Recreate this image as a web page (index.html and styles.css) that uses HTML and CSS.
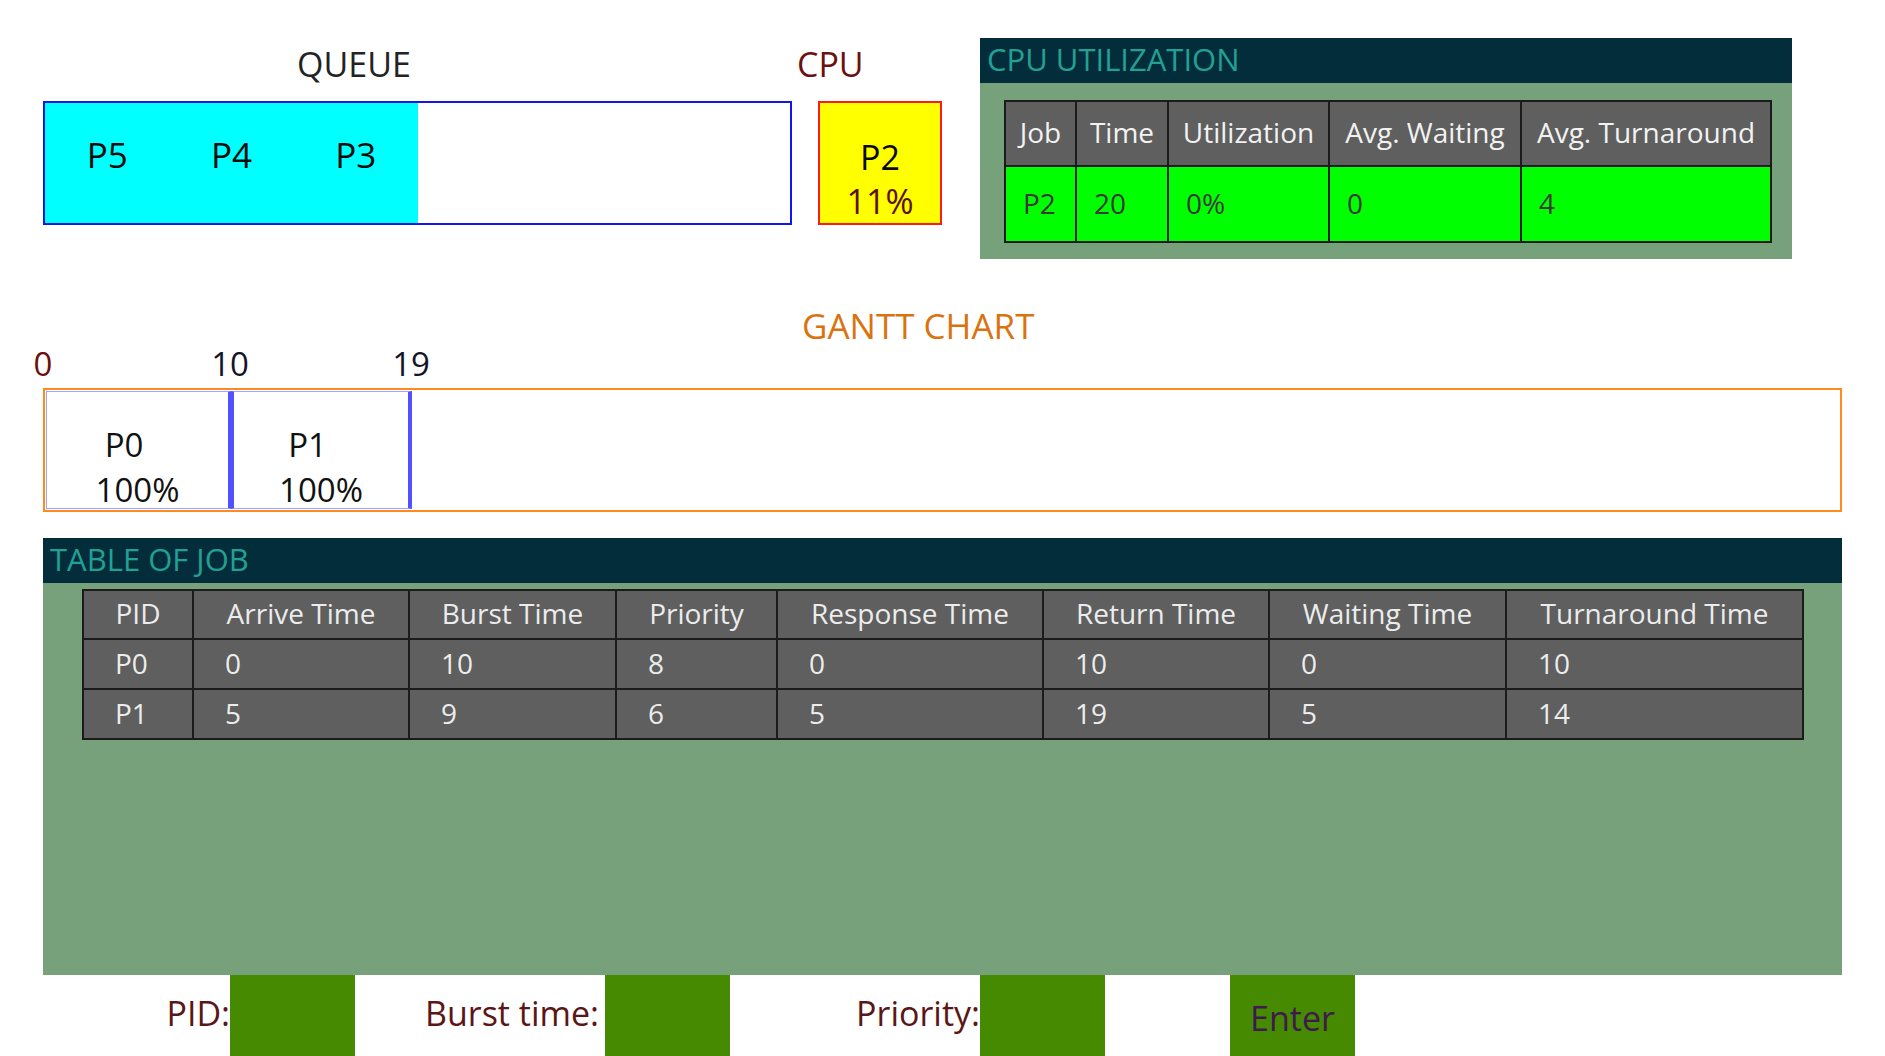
FILE: index.html
```html
<!DOCTYPE html>
<html lang="en">
<head>
<meta charset="utf-8">
<title>CPU Scheduling</title>
<link rel="stylesheet" href="styles.css">
</head>
<body>
<div class="app">
  <section class="top">
    <div class="queue-area">
      <div class="label queue-label">QUEUE</div>
      <div class="queue-box">
        <div class="queue-fill">
          <div class="qitem">P5</div>
          <div class="qitem">P4</div>
          <div class="qitem">P3</div>
        </div>
      </div>
    </div>
    <div class="cpu-area">
      <div class="label cpu-label">CPU</div>
      <div class="cpu-box">
        <div class="cpu-job">P2</div>
        <div class="cpu-pct">11%</div>
      </div>
    </div>
    <div class="panel util">
      <div class="panel-head">CPU UTILIZATION</div>
      <div class="util-body">
        <table class="util-table">
          <colgroup>
            <col class="uc1"><col class="uc2"><col class="uc3"><col class="uc4"><col class="uc5">
          </colgroup>
          <tr class="head"><th>Job</th><th>Time</th><th>Utilization</th><th>Avg. Waiting</th><th>Avg. Turnaround</th></tr>
          <tr class="data"><td>P2</td><td>20</td><td>0%</td><td>0</td><td>4</td></tr>
        </table>
      </div>
    </div>
  </section>

  <section class="gantt">
    <div class="gantt-title">GANTT CHART</div>
    <div class="ticks">
      <span class="tick tick-start" style="left:0px">0</span>
      <span class="tick" style="left:187px">10</span>
      <span class="tick" style="left:368px">19</span>
    </div>
    <div class="gantt-box">
      <div class="gcell g-p0">
        <div class="gname">P0</div>
        <div class="gpct">100%</div>
      </div>
      <div class="gcell g-p1">
        <div class="gname">P1</div>
        <div class="gpct">100%</div>
      </div>
    </div>
  </section>

  <section class="panel jobs">
    <div class="panel-head">TABLE OF JOB</div>
    <div class="jobs-body">
      <table class="job-table">
        <colgroup>
          <col class="jc1"><col class="jc2"><col class="jc3"><col class="jc4"><col class="jc5"><col class="jc6"><col class="jc7"><col class="jc8">
        </colgroup>
        <tr class="head"><th>PID</th><th>Arrive Time</th><th>Burst Time</th><th>Priority</th><th>Response Time</th><th>Return Time</th><th>Waiting Time</th><th>Turnaround Time</th></tr>
        <tr><td>P0</td><td>0</td><td>10</td><td>8</td><td>0</td><td>10</td><td>0</td><td>10</td></tr>
        <tr><td>P1</td><td>5</td><td>9</td><td>6</td><td>5</td><td>19</td><td>5</td><td>14</td></tr>
      </table>
    </div>
  </section>

  <section class="inputs">
    <div class="in-label l1">PID:</div>
    <div class="in-box"></div>
    <div class="in-label l2">Burst time:</div>
    <div class="in-box"></div>
    <div class="in-label l3">Priority:</div>
    <div class="in-box"></div>
    <div class="spacer"></div>
    <div class="in-box enter">Enter</div>
  </section>
</div>
</body>
</html>
```

FILE: styles.css
```css
html, body {
  margin: 0;
  padding: 0;
  height: 100%;
  overflow: hidden;
  background: #ffffff;
}

body {
  font-family: "Open Sans", "Noto Sans", sans-serif;
  color: #111111;
}

.app {
  padding: 0 43px;
}

/* ---------- top row ---------- */
.top {
  display: flex;
  align-items: flex-start;
  padding-top: 38px;
  height: 257px;
  box-sizing: border-box;
}

.label {
  font-size: 34px;
  line-height: 46px;
  margin-top: 3px;
  white-space: nowrap;
}

.queue-area {
  width: 749px;
  flex: none;
}

.queue-label {
  padding-left: 254px;
  color: #232323;
}

.queue-box {
  margin-top: 14px;
  height: 124px;
  box-sizing: border-box;
  border: 2px solid #1414f0;
  display: flex;
}

.queue-fill {
  display: flex;
  background: #00ffff;
}

.qitem {
  width: 124.33px;
  text-align: center;
  font-size: 35px;
  line-height: 44px;
  padding-top: 30px;
  color: #0a0a0a;
}

.cpu-area {
  margin-left: 5px;
  width: 145px;
  flex: none;
}

.cpu-label {
  color: #6b1111;
}

.cpu-box {
  margin-left: 21px;
  margin-top: 14px;
  width: 124px;
  height: 124px;
  box-sizing: border-box;
  border: 2px solid #ff1a1a;
  background: #ffff00;
  display: flex;
  flex-direction: column;
  justify-content: flex-end;
  align-items: center;
  font-size: 34px;
  line-height: 44px;
}

.cpu-job {
  color: #0a0a0a;
}

.cpu-pct {
  color: #5c1005;
}

/* ---------- panels ---------- */
.panel {
  background: #76a17b;
}

.panel-head {
  height: 45px;
  box-sizing: border-box;
  background: #032d3b;
  color: #22a093;
  font-size: 31px;
  line-height: 42px;
  padding-left: 7px;
  white-space: nowrap;
}

.util {
  margin-left: 38px;
  width: 812px;
  flex: none;
}

.util-body {
  padding: 17px 22px 16px 24px;
}

table {
  border-collapse: collapse;
  table-layout: fixed;
}

th, td {
  border: 2px solid #1b1b1b;
  font-weight: normal;
  white-space: nowrap;
  padding: 0;
}

.util-table {
  width: 766px;
  font-size: 28px;
}

.uc1 { width: 71px; }
.uc2 { width: 92px; }
.uc3 { width: 161px; }
.uc4 { width: 192px; }
.uc5 { width: 250px; }

.util-table .head {
  height: 65px;
  background: #5f5f5f;
  color: #f2f2f2;
}

.util-table th {
  text-align: center;
  padding-bottom: 4px;
}

.util-table .data {
  height: 76px;
  background: #00ff00;
  color: #3a3a3a;
}

.util-table td {
  text-align: left;
  padding-left: 17px;
  padding-bottom: 3px;
}

/* ---------- gantt ---------- */
.gantt {
  margin-top: 49px;
}

.gantt-title {
  font-size: 35px;
  line-height: 40px;
  color: #da730f;
  padding-left: 759px;
}

.ticks {
  position: relative;
  height: 42px;
  font-size: 33px;
  line-height: 40px;
  color: #141428;
}

.tick {
  position: absolute;
  top: -2px;
  transform: translateX(-50%);
}

.tick-start {
  color: #6a1010;
}

.gantt-box {
  height: 124px;
  box-sizing: border-box;
  border: 2px solid #ff8c1a;
  padding: 1px;
  display: flex;
}

.gcell {
  height: 100%;
  box-sizing: border-box;
  border: 1px solid #a3a3ff;
  border-right: 4px solid #5151ff;
  display: flex;
  flex-direction: column;
  align-items: center;
  padding-top: 30px;
  font-size: 33px;
  line-height: 45px;
  color: #111111;
}

.gcell + .gcell {
  border-left: 2px solid #5151ff;
}

.g-p0 { width: 186px; }
.g-p1 { width: 180px; }

.gname {
  padding-right: 27px;
}

/* ---------- job table ---------- */
.jobs {
  margin-top: 26px;
}

.jobs-body {
  height: 392px;
  box-sizing: border-box;
  padding: 6px 40px 0 39px;
}

.job-table {
  width: 1720px;
  font-size: 28px;
  background: #5f5f5f;
  color: #ececec;
}

.jc1 { width: 110px; }
.jc2 { width: 216px; }
.jc3 { width: 207px; }
.jc4 { width: 161px; }
.jc5 { width: 266px; }
.jc6 { width: 226px; }
.jc7 { width: 237px; }
.jc8 { width: 297px; }

.job-table .head {
  height: 49px;
}

.job-table th {
  text-align: center;
  padding-bottom: 3px;
}

.job-table tr {
  height: 50px;
}

.job-table td {
  text-align: left;
  padding-left: 31px;
  padding-bottom: 3px;
}

/* ---------- inputs ---------- */
.inputs {
  display: flex;
  height: 81px;
}

.in-label {
  text-align: right;
  font-size: 34px;
  line-height: 48px;
  padding-top: 14px;
  color: #5b1616;
  box-sizing: border-box;
  white-space: nowrap;
}

.l1 { width: 187px; }
.l2 { width: 250px; padding-right: 6px; }
.l3 { width: 250px; }

.in-box {
  width: 125px;
  flex: none;
  background: #458a00;
}

.spacer {
  width: 125px;
}

.enter {
  text-align: center;
  font-size: 34px;
  line-height: 48px;
  padding-top: 19px;
  color: #3e1a4e;
  box-sizing: border-box;
}
```
